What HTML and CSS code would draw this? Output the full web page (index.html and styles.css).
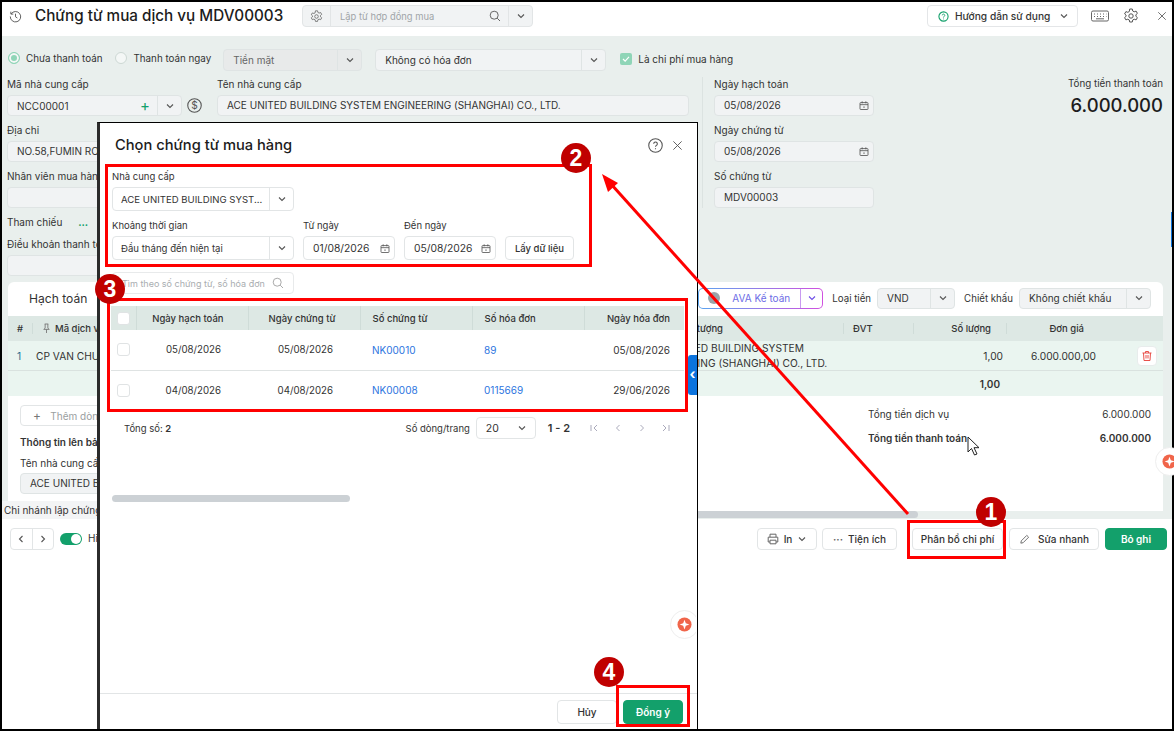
FILE: index.html
```html
<!DOCTYPE html>
<html lang="vi">
<head>
    <meta charset="UTF-8">
    <meta name="viewport" content="width=device-width, initial-scale=1.0">
    <title>Chứng từ mua dịch vụ</title>
    <link rel="stylesheet" href="styles.css">
</head>
<body>
<svg class="sprite" width="0" height="0">
    <symbol id="chev" viewBox="0 0 10 10"><path d="M2 3.500 5 6.500 8 3.500" fill="none" stroke="currentColor" stroke-width="1.100"/></symbol>
    <symbol id="cal" viewBox="0 0 12 12"><path d="M2 2.500h8a.8.8 0 0 1 .8.8V10a.8.8 0 0 1-.8.8H2a.8.8 0 0 1-.8-.8V3.300A.8.8 0 0 1 2 2.500ZM1.200 5h9.600M3.800 1v2.400M8.200 1v2.400M6 7v2" fill="none" stroke="currentColor"/></symbol>
    <symbol id="cross" viewBox="0 0 12 12"><path d="M1.500 1.500 10.500 10.500M10.500 1.500 1.500 10.500" fill="none" stroke="currentColor" stroke-width="1"/></symbol>
    <symbol id="gear" viewBox="0 0 16 16"><path d="M6.700 1h2.600l.4 2 1.500.8 1.900-.7 1.300 2.300-1.500 1.300v1.600l1.500 1.300-1.300 2.300-1.900-.7-1.500.8-.4 2H6.700l-.4-2-1.500-.8-1.900.7-1.300-2.300 1.500-1.300V7.200L1.600 5.900l1.300-2.300 1.900.7 1.500-.8Z" fill="none" stroke="currentColor"/><circle cx="8" cy="8" r="2.200" fill="none" stroke="currentColor"/></symbol>
    <symbol id="star" viewBox="0 0 16 16"><circle cx="8" cy="8" r="7.500" fill="#f0654a"/><path d="M8 2.800 9.400 6.600 13.200 8 9.400 9.400 8 13.200 6.600 9.400 2.800 8 6.600 6.600Z" fill="#fff"/></symbol>
</svg>

<div class="frame">
    <div class="app">
        <header class="topbar">
            <svg class="ico-history" viewBox="0 0 14 14"><path d="M2.300 4.200A5.600 5.600 0 1 1 1.400 7M2 1.800v2.600h2.600M7 4v3.300l2 1.300" fill="none" stroke="#555" stroke-width="1"/></svg>
            <h1>Chứng từ mua dịch vụ MDV00003</h1>
            <div class="combo">
                <span class="combo-gear"><svg class="ico-14" viewBox="0 0 16 16"><use href="#gear"/></svg></span>
                <span class="combo-text">Lập từ hợp đồng mua</span>
                <svg class="ico-search" viewBox="0 0 12 12"><circle cx="5.200" cy="5.200" r="4" fill="none" stroke="#666"/><path d="M8.200 8.200 11 11" stroke="#666"/></svg>
                <span class="combo-arrow"><svg class="ico-10" viewBox="0 0 10 10"><use href="#chev"/></svg></span>
            </div>
            <div class="topbar-right">
                <button class="guide">
                    <svg class="ico-guide" viewBox="0 0 12 12"><circle cx="6" cy="6" r="5" fill="none" stroke="#13a06b" stroke-width="1.200"/><path d="M4.600 4.700a1.400 1.400 0 1 1 2.100 1.300c-.5.300-.7.500-.7 1M6 8.300v.8" fill="none" stroke="#13a06b"/></svg>
                    Hướng dẫn sử dụng
                    <svg class="ico-10" viewBox="0 0 10 10"><use href="#chev"/></svg>
                </button>
                <svg class="ico-kb" viewBox="0 0 18 12"><rect x=".5" y="1" width="17" height="10" rx="1.500" fill="none" stroke="#666"/><path d="M3 4h1M6 4h1M9 4h1M12 4h1M15 4h.5M3 6.500h1M6 6.500h1M9 6.500h1M12 6.500h1M15 6.500h.5M5 8.800h8" stroke="#666"/></svg>
                <svg class="ico-gear" viewBox="0 0 16 16"><use href="#gear"/></svg>
                <svg class="ico-x" viewBox="0 0 12 12"><use href="#cross"/></svg>
            </div>
        </header>

        <main class="content">
            <div class="pay-row">
                <label class="radio radio-on"><i></i>Chưa thanh toán</label>
                <label class="radio"><i></i>Thanh toán ngay</label>
                <div class="select select-cash disabled"><span>Tiền mặt</span><b><svg class="ico-10" viewBox="0 0 10 10"><use href="#chev"/></svg></b></div>
                <div class="select select-invoice"><span>Không có hóa đơn</span><b><svg class="ico-10" viewBox="0 0 10 10"><use href="#chev"/></svg></b></div>
                <label class="check-on"><i><svg viewBox="0 0 10 10"><path d="M2.500 5 4.300 6.800 7.500 3.300" fill="none" stroke="#fff"/></svg></i>Là chi phí mua hàng</label>
            </div>

            <div class="form-area">
                <div class="form-left">
                    <div class="form-two">
                        <div class="field">
                            <label>Mã nhà cung cấp</label>
                            <div class="code-line">
                                <div class="select select-code"><span>NCC00001</span><em>+</em><b><svg class="ico-10" viewBox="0 0 10 10"><use href="#chev"/></svg></b></div>
                                <svg class="ico-dollar" viewBox="0 0 14 14"><circle cx="7" cy="7" r="6.300" fill="none" stroke="#555"/><text x="7" y="10.300" text-anchor="middle" class="dollar">$</text></svg>
                            </div>
                        </div>
                        <div class="field">
                            <label>Tên nhà cung cấp</label>
                            <div class="input">ACE UNITED BUILDING SYSTEM ENGINEERING (SHANGHAI) CO., LTD.</div>
                        </div>
                    </div>
                    <div class="field">
                        <label>Địa chỉ</label>
                        <div class="input">NO.58,FUMIN ROAD</div>
                    </div>
                    <div class="field">
                        <label>Nhân viên mua hàng</label>
                        <div class="input"></div>
                    </div>
                    <div class="ref-line">Tham chiếu <span>...</span></div>
                    <div class="field">
                        <label>Điều khoản thanh toán</label>
                        <div class="input"></div>
                    </div>
                </div>

                <div class="form-dates">
                    <div class="field">
                        <label>Ngày hạch toán</label>
                        <div class="input input-date">05/08/2026<svg class="ico-cal" viewBox="0 0 12 12"><use href="#cal"/></svg></div>
                    </div>
                    <div class="field">
                        <label>Ngày chứng từ</label>
                        <div class="input input-date">05/08/2026<svg class="ico-cal" viewBox="0 0 12 12"><use href="#cal"/></svg></div>
                    </div>
                    <div class="field">
                        <label>Số chứng từ</label>
                        <div class="input">MDV00003</div>
                    </div>
                </div>

                <div class="form-total">
                    <p>Tổng tiền thanh toán</p>
                    <strong>6.000.000</strong>
                </div>
            </div>

            <section class="card">
                <div class="card-tabs">
                    <span class="tab">Hạch toán</span>
                    <div class="card-tools">
                        <div class="ava">
                            <span class="ava-main"><i class="ava-ball"></i>AVA Kế toán</span>
                            <span class="ava-arrow"><svg class="ico-10" viewBox="0 0 10 10"><use href="#chev"/></svg></span>
                        </div>
                        <span class="tool-label">Loại tiền</span>
                        <div class="select select-vnd"><span>VND</span><b><svg class="ico-10" viewBox="0 0 10 10"><use href="#chev"/></svg></b></div>
                        <span class="tool-label">Chiết khấu</span>
                        <div class="select select-discount"><span>Không chiết khấu</span><b><svg class="ico-10" viewBox="0 0 10 10"><use href="#chev"/></svg></b></div>
                    </div>
                </div>
                <div class="grid-row grid-head">
                    <span>#</span>
                    <span class="cell-code">
                        <svg class="ico-pin" viewBox="0 0 10 12"><path d="M3 1h4M3.500 1v4.500L2 7h6L6.500 5.500V1M5 7v4" fill="none" stroke="#777"/></svg>
                        Mã dịch vụ
                    </span>
                    <span class="cell-party">Tên đối tượng</span>
                    <span>ĐVT</span>
                    <span class="num">Số lượng</span>
                    <span class="num">Đơn giá</span>
                    <span></span>
                </div>
                <div class="grid-row grid-data">
                    <span class="cell-idx">1</span>
                    <span class="cell-code">CP VAN CHUYỂN</span>
                    <span class="cell-party cell-wrap">ACE UNITED BUILDING SYSTEM ENGINEERING (SHANGHAI) CO., LTD.</span>
                    <span></span>
                    <span class="num">1,00</span>
                    <span class="num">6.000.000,00</span>
                    <span class="cell-del">
                        <i class="del-btn"><svg viewBox="0 0 12 12"><path d="M1.500 3h9M4.500 3V1.500h3V3M2.500 3l.5 7.500h6L9.500 3M5 5v3.500M7 5v3.500" fill="none" stroke="#e8504a"/></svg></i>
                    </span>
                </div>
                <div class="grid-row grid-sum">
                    <span></span><span></span><span></span><span></span>
                    <span class="num"><b>1,00</b></span>
                    <span></span><span></span>
                </div>
                <div class="card-bottom">
                    <div class="bottom-left">
                        <div class="add-line">+ <span>Thêm dòng</span></div>
                        <p class="info-title">Thông tin lên bảng kê</p>
                        <p class="info-label">Tên nhà cung cấp</p>
                        <div class="input info-input">ACE UNITED BUILDING</div>
                        <p class="branch">Chi nhánh lập chứng từ</p>
                    </div>
                    <div class="bottom-right">
                        <div class="sum-line"><span>Tổng tiền dịch vụ</span><span>6.000.000</span></div>
                        <div class="sum-line sum-bold"><span>Tổng tiền thanh toán</span><span>6.000.000</span></div>
                    </div>
                </div>
            </section>
            <div class="page-scroll"><i></i></div>
        </main>

        <footer class="actions">
            <div class="pager-btns">
                <span><svg class="ico-10 flip" viewBox="0 0 10 10"><use href="#chev"/></svg></span>
                <span><svg class="ico-10 flip-r" viewBox="0 0 10 10"><use href="#chev"/></svg></span>
            </div>
            <i class="toggle"></i>
            <span class="toggle-label">Hiển thị</span>
            <div class="actions-right">
                <button class="btn btn-print">
                    <svg class="ico-print" viewBox="0 0 12 12"><path d="M3 4V1.200h6V4M3 9H1.200V4.200h9.600V9H9M3 7.200h6v3.600H3Z" fill="none" stroke="#666"/></svg>
                    In <svg class="ico-10" viewBox="0 0 10 10"><use href="#chev"/></svg>
                </button>
                <button class="btn btn-util"><span class="dots">···</span> Tiện ích</button>
                <button class="btn btn-alloc">Phân bổ chi phí</button>
                <button class="btn btn-quick">
                    <svg class="ico-pen" viewBox="0 0 12 12"><path d="M2 10 2.500 7.500 8.500 1.500 10.500 3.500 4.500 9.500Z" fill="none" stroke="#666"/></svg>
                    Sửa nhanh
                </button>
                <button class="btn btn-green btn-unpost">Bỏ ghi</button>
            </div>
        </footer>
    </div>

    <div class="modal">
        <div class="modal-head">
            <h2>Chọn chứng từ mua hàng</h2>
            <svg class="ico-help" viewBox="0 0 14 14"><circle cx="7" cy="7" r="6.300" fill="none" stroke="#555"/><path d="M5.300 5.400a1.700 1.700 0 1 1 2.600 1.500c-.6.400-.9.700-.9 1.300M7 9.600v1" fill="none" stroke="#555"/></svg>
            <svg class="ico-x" viewBox="0 0 12 12"><use href="#cross"/></svg>
        </div>
        <div class="filter">
            <label>Nhà cung cấp</label>
            <div class="mselect mselect-wide"><span>ACE UNITED BUILDING SYST...</span><b><svg class="ico-10" viewBox="0 0 10 10"><use href="#chev"/></svg></b></div>
            <div class="filter-row">
                <div>
                    <label>Khoảng thời gian</label>
                    <div class="mselect mselect-wide"><span>Đầu tháng đến hiện tại</span><b><svg class="ico-10" viewBox="0 0 10 10"><use href="#chev"/></svg></b></div>
                </div>
                <div>
                    <label>Từ ngày</label>
                    <div class="mdate">01/08/2026<svg class="ico-cal" viewBox="0 0 12 12"><use href="#cal"/></svg></div>
                </div>
                <div>
                    <label>Đến ngày</label>
                    <div class="mdate">05/08/2026<svg class="ico-cal" viewBox="0 0 12 12"><use href="#cal"/></svg></div>
                </div>
                <button class="btn btn-fetch">Lấy dữ liệu</button>
            </div>
        </div>
        <div class="msearch">
            <span>Tìm theo số chứng từ, số hóa đơn</span>
            <svg class="ico-search" viewBox="0 0 12 12"><circle cx="5.200" cy="5.200" r="4" fill="none" stroke="#aaa"/><path d="M8.200 8.200 11 11" stroke="#aaa"/></svg>
        </div>
        <table class="docs">
            <thead>
                <tr>
                    <th class="col-check"><i class="box box-head"></i></th>
                    <th class="col-date">Ngày hạch toán</th>
                    <th class="col-date">Ngày chứng từ</th>
                    <th class="col-link">Số chứng từ</th>
                    <th class="col-link">Số hóa đơn</th>
                    <th class="col-end">Ngày hóa đơn</th>
                </tr>
            </thead>
            <tbody>
                <tr>
                    <td class="col-check"><i class="box"></i></td>
                    <td class="col-date">05/08/2026</td>
                    <td class="col-date">05/08/2026</td>
                    <td class="col-link"><a>NK00010</a></td>
                    <td class="col-link"><a>89</a></td>
                    <td class="col-end">05/08/2026</td>
                </tr>
                <tr>
                    <td class="col-check"><i class="box"></i></td>
                    <td class="col-date">04/08/2026</td>
                    <td class="col-date">04/08/2026</td>
                    <td class="col-link"><a>NK00008</a></td>
                    <td class="col-link"><a>0115669</a></td>
                    <td class="col-end">29/06/2026</td>
                </tr>
            </tbody>
        </table>
        <div class="mpager">
            <span class="mpager-total">Tổng số: <b>2</b></span>
            <span class="mpager-label">Số dòng/trang</span>
            <div class="mpager-size"><span>20</span><svg class="ico-10" viewBox="0 0 10 10"><use href="#chev"/></svg></div>
            <b class="mpager-range">1 - 2</b>
            <div class="mpager-icons">
                <svg viewBox="0 0 10 10"><path d="M2 2v6M8 2 5 5 8 8" fill="none" stroke="#aab"/></svg>
                <svg viewBox="0 0 10 10"><path d="M6.500 2 3.500 5 6.500 8" fill="none" stroke="#aab"/></svg>
                <svg viewBox="0 0 10 10"><path d="M3.500 2 6.500 5 3.500 8" fill="none" stroke="#aab"/></svg>
                <svg viewBox="0 0 10 10"><path d="M8 2v6M2 2 5 5 2 8" fill="none" stroke="#aab"/></svg>
            </div>
        </div>
        <div class="mscroll"></div>
        <div class="modal-foot">
            <button class="btn btn-cancel">Hủy</button>
            <button class="btn btn-green btn-ok">Đồng ý</button>
        </div>
    </div>

    <!-- floating bits and the red markup drawn over the screenshot -->
    <span class="blue-line"></span>
    <span class="side-tab">‹</span>
    <span class="star-btn star-modal"><svg viewBox="0 0 16 16"><use href="#star"/></svg></span>
    <span class="star-btn star-page"><svg viewBox="0 0 16 16"><use href="#star"/></svg></span>

    <span class="redbox box-1"></span>
    <span class="redbox box-2"></span>
    <span class="redbox box-3"></span>
    <span class="redbox box-4"></span>
    <svg class="arrow" viewBox="0 0 1174 731">
        <path d="M908 514 611 184" stroke="#f00" stroke-width="3" fill="none"/>
        <path d="M602 174 618 183 608 192Z" fill="#f00"/>
        <path d="M968 437v15l3.500-3.500 3 6.500 2.500-1-3-6.300h5Z" fill="#fff" stroke="#222"/>
    </svg>
    <span class="step step-1">1</span>
    <span class="step step-2">2</span>
    <span class="step step-3">3</span>
    <span class="step step-4">4</span>
</div>
</body>
</html>
```

FILE: styles.css
```css
* {
    margin: 0;
    padding: 0;
    box-sizing: border-box;
}

body {
    font-family: 'Inter', 'Liberation Sans', sans-serif;
    font-size: 10px;
    color: #333;
    background: #fff;
}

.sprite {
    position: absolute;
}

svg {
    display: block;
    flex: none;
}

i {
    display: block;
    font-style: normal;
}

.ico-10 { width: 10px; height: 10px; color: #555; }
.ico-14 { width: 13px; height: 13px; color: #666; }

.frame {
    position: relative;
    width: 1174px;
    height: 731px;
    padding: 2px;
    background: #000;
    overflow: hidden;
}

.app {
    height: 727px;
    background: #fff;
    display: flex;
    flex-direction: column;
}

/* top bar */
.topbar {
    height: 34px;
    padding: 3px 5px 0 7px;
    display: flex;
    align-items: flex-start;
    flex: none;
}

.ico-history {
    width: 13px;
    height: 13px;
    margin-top: 5px;
}

.topbar h1 {
    font-size: 15.250px;
    font-weight: 500;
    color: #1c1c1c;
    margin-left: 13px;
    width: 267px;
    line-height: 22px;
    white-space: nowrap;
}

.combo {
    width: 231px;
    height: 22px;
    display: flex;
    align-items: center;
    background: #f1f3f4;
    border: 1px solid #e2e5e6;
    border-radius: 4px;
}

.combo-gear {
    width: 28px;
    height: 100%;
    border-right: 1px solid #e2e5e6;
    display: flex;
    align-items: center;
    justify-content: center;
}

.combo-text {
    flex: 1;
    padding-left: 9px;
    color: #a0a5a8;
    font-size: 9.400px;
}

.ico-search {
    width: 12px;
    height: 12px;
    margin-right: 7px;
}

.combo-arrow {
    width: 24px;
    height: 100%;
    border-left: 1px solid #e2e5e6;
    display: flex;
    align-items: center;
    justify-content: center;
}

.topbar-right {
    margin-left: auto;
    display: flex;
    align-items: center;
    height: 22px;
}

.guide {
    width: 151px;
    height: 22px;
    display: flex;
    align-items: center;
    gap: 6px;
    padding-left: 10px;
    background: #fff;
    border: 1px solid #e4e6e8;
    border-radius: 4px;
    font: 500 10.200px 'Inter', sans-serif;
    color: #333;
}

.guide .ico-10 {
    margin-left: 3px;
}

.ico-guide { width: 11px; height: 11px; }
.ico-kb { width: 18px; height: 12px; margin-left: 13px; }
.ico-gear { width: 16px; height: 16px; margin-left: 14px; color: #555; }
.topbar-right .ico-x { width: 10px; height: 10px; margin-left: 18px; color: #555; }

/* form */
.content {
    height: 483px;
    flex: none;
    background: #e9efed;
    padding: 13px 0 0 5px;
    display: flex;
    flex-direction: column;
}

.pay-row {
    height: 22px;
    display: flex;
    align-items: center;
    margin-bottom: 6px;
}

.radio {
    display: flex;
    align-items: center;
    gap: 6px;
    margin-right: 12px;
    margin-top: -4px;
    margin-left: 1px;
    font-size: 9.800px;
}

.radio i {
    width: 12px;
    height: 12px;
    border-radius: 50%;
    border: 1px solid #cdd8d4;
    background: #f4f7f6;
}

.radio-on i {
    background: #8fd5b7;
    box-shadow: inset 0 0 0 2px #f4f7f6;
    border-color: #8fd5b7;
}

.select {
    height: 21px;
    display: flex;
    align-items: center;
    background: #f1f3f4;
    border: 1px solid #dfe4e4;
    border-radius: 4px;
}

.select span {
    flex: 1;
    padding-left: 9px;
    white-space: nowrap;
}

.select b {
    width: 24px;
    height: 100%;
    border-left: 1px solid #dfe4e4;
    display: flex;
    align-items: center;
    justify-content: center;
}

.select em {
    color: #13a06b;
    font-style: normal;
    font-size: 15px;
    line-height: 1;
    margin-right: 7px;
}

.disabled {
    background: #e8eaea;
    color: #666;
}

.select-cash { width: 139px; margin: 0 13px 0 0; height: 22px; }
.select-invoice { width: 231px; height: 22px; }

.check-on {
    display: flex;
    align-items: center;
    gap: 6px;
    margin-left: 14px;
    margin-top: -3px;
}

.check-on i {
    width: 12px;
    height: 12px;
    border-radius: 2px;
    background: #8fd5b7;
}

.form-area {
    display: flex;
    height: 205px;
    flex: none;
}

.form-left {
    width: 682px;
}

.form-two {
    display: flex;
}

.form-two .field:first-child {
    width: 175px;
}

.form-two .field:last-child {
    flex: 1;
    margin-left: 35px;
}

.field {
    margin-bottom: 7px;
}

.field label,
.filter label {
    display: block;
    line-height: 14px;
    margin-bottom: 4px;
    white-space: nowrap;
}

.input {
    height: 21px;
    line-height: 19px;
    padding-left: 9px;
    background: #f1f3f4;
    border: 1px solid #dfe4e4;
    border-radius: 4px;
    white-space: nowrap;
    overflow: hidden;
}

.code-line {
    position: relative;
    display: flex;
}

.select-code {
    width: 175px;
    flex: none;
}

.ico-dollar {
    width: 15px;
    height: 15px;
    margin-top: 3px;
    position: absolute;
    left: 180px;
}

.dollar {
    font-size: 9.500px;
    fill: #555;
}

.ref-line {
    height: 15px;
    line-height: 15px;
    margin-bottom: 7px;
}

.ref-line span {
    color: #13a06b;
    font-weight: 700;
    margin-left: 13px;
}

.form-dates {
    width: 172px;
    margin-left: 13px;
    padding-left: 11px;
    border-left: 1px solid #dce3e1;
    height: 131px;
}

.form-dates .input {
    width: 160px;
}

.input-date {
    display: flex;
    align-items: center;
    justify-content: space-between;
    padding-right: 4px;
}

.ico-cal {
    width: 10px;
    height: 11px;
    color: #555;
}

.form-total {
    flex: 1;
    text-align: right;
    padding-right: 9px;
}

.form-total p {
    line-height: 14px;
    font-size: 9.800px;
}

.form-total strong {
    display: block;
    font-size: 18.500px;
    font-weight: 500;
    color: #1d1d1d;
    line-height: 24px;
    margin-top: 2px;
}

/* detail card */
.card {
    width: 1155px;
    margin-left: 1px;
    height: 229px;
    flex: none;
    background: #fff;
    border-radius: 6px 6px 0 0;
}

.card-tabs {
    height: 34px;
    display: flex;
    align-items: center;
}

.tab {
    font-size: 12.100px;
    margin-left: 21px;
    margin-top: -2px;
}

.card-tools {
    margin-left: auto;
    display: flex;
    align-items: center;
    padding-right: 12px;
    margin-top: -2px;
}

.ava {
    width: 125px;
    height: 21px;
    display: flex;
    border: 1px solid transparent;
    border-radius: 5px;
    background: linear-gradient(#fff, #fff) padding-box,
        linear-gradient(90deg, #5aa5f0, #d050e0) border-box;
}

.ava-main {
    flex: 1;
    display: flex;
    align-items: center;
    gap: 12px;
    padding-left: 9px;
    color: #6d6de6;
}

.ava-ball {
    width: 12px;
    height: 12px;
    border-radius: 50%;
    background: #9aa3a8;
}

.ava-arrow {
    width: 22px;
    border-left: 1px solid #c89af0;
    display: flex;
    align-items: center;
    justify-content: center;
}

.ava-arrow .ico-10 {
    color: #6d4de6;
}

.tool-label {
    margin: 0 6px 0 9px;
    font-size: 9.700px;
}

.select-vnd { width: 78px; }
.select-discount { width: 132px; }

.grid-row {
    display: grid;
    grid-template-columns: 24px 611px 200px 70px 93px 93px 64px;
    align-items: center;
}

.grid-head {
    height: 25px;
    background: #dde8e4;
    font-weight: 500;
    font-size: 9.500px;
}

.grid-head span {
    padding-left: 9px;
    border-left: 1px solid #cfdcd8;
}

.grid-head span:first-child {
    border-left: 0;
}

.grid-data {
    height: 30px;
    background: #eaf5f0;
    border-bottom: 1px solid #d9e2df;
    font-size: 10.200px;
}

.grid-sum {
    height: 25px;
    background: #eaf5f0;
}

.grid-head .num {
    text-align: right;
    padding-right: 15px;
}

.grid-data .num {
    text-align: right;
    padding-right: 3px;
}

.grid-sum .num {
    text-align: right;
    padding-right: 6px;
}

.grid-sum b {
    font-weight: 600;
}

.cell-idx {
    padding-left: 9px;
    color: #2a6f8f;
}

.grid-data .cell-code {
    padding-left: 4px;
}

.grid-head .cell-code {
    padding-left: 9px;
}

.cell-code {
    display: flex;
    align-items: center;
    gap: 4px;
}

.ico-pin {
    width: 9px;
    height: 11px;
}

.grid-head .cell-party {
    padding-left: 17px;
}

.cell-wrap {
    line-height: 15px;
    padding-left: 4px;
}

.cell-del {
    display: flex;
    justify-content: flex-end;
    padding-right: 6px;
}

.del-btn {
    width: 20px;
    height: 20px;
    background: #fff;
    border: 1px solid #e8ecec;
    border-radius: 4px;
    padding: 3px;
}

.card-bottom {
    height: 115px;
    display: flex;
    justify-content: space-between;
    position: relative;
}

.bottom-left {
    width: 90px;
    padding: 9px 0 0 12px;
    white-space: nowrap;
}

.add-line {
    width: 90px;
    height: 21px;
    line-height: 19px;
    border: 1px solid #e2e5e6;
    border-radius: 4px;
    padding-left: 12px;
    color: #777;
    font-size: 12px;
}

.add-line span {
    font-size: 10px;
    margin-left: 6px;
    color: #9a9ea0;
}

.info-title {
    font-weight: 600;
    line-height: 14px;
    margin-top: 9px;
}

.info-label {
    line-height: 14px;
    margin-top: 7px;
}

.info-input {
    width: 160px;
    margin-top: 3px;
}

.branch {
    margin: 7px 0 0 -18px;
    width: 130px;
    line-height: 18px;
    background: #f3f4f5;
    padding-left: 2px;
    color: #333;
}

.bottom-right {
    width: 295px;
    padding: 10px 12px 0 0;
}

.sum-line {
    display: flex;
    justify-content: space-between;
    line-height: 16px;
    margin-bottom: 8px;
}

.sum-bold {
    font-weight: 600;
}

.page-scroll {
    height: 8px;
    flex: none;
}

.page-scroll i {
    width: 911px;
    height: 7px;
    background: #ccd1d5;
    border-radius: 4px;
}

/* bottom actions */
.actions {
    flex: 1;
    display: flex;
    align-items: flex-start;
    padding: 9px 5px 0 8px;
}

.pager-btns {
    display: flex;
    width: 44px;
    height: 22px;
    border: 1px solid #e2e5e6;
    border-radius: 4px;
}

.pager-btns span {
    flex: 1;
    display: flex;
    align-items: center;
    justify-content: center;
}

.pager-btns span + span {
    border-left: 1px solid #e2e5e6;
}

.flip { transform: rotate(90deg); }
.flip-r { transform: rotate(-90deg); }

.toggle {
    position: relative;
    width: 22px;
    height: 12px;
    margin: 5px 0 0 6px;
    border-radius: 6px;
    background: #13a06b;
}

.toggle::after {
    content: "";
    position: absolute;
    right: 1px;
    top: 1px;
    width: 10px;
    height: 10px;
    border-radius: 50%;
    background: #fff;
}

.toggle-label {
    margin: 4px 0 0 6px;
}

.actions-right {
    margin-left: auto;
    display: flex;
    gap: 5px;
}

.btn {
    height: 22px;
    display: flex;
    align-items: center;
    justify-content: center;
    gap: 5px;
    background: #fff;
    border: 1px solid #e2e5e6;
    border-radius: 4px;
    font: 500 10px 'Inter', sans-serif;
    color: #333;
    white-space: nowrap;
}

.btn-green {
    background: #13a06b;
    border-color: #13a06b;
    color: #fff;
    font-weight: 600;
}

.btn-print { width: 60px; }
.btn-util { width: 75px; margin-right: 10px; }
.btn-alloc { width: 91px; margin-right: 1px; }
.btn-quick { width: 90px; gap: 8px; margin-right: 1px; }
.btn-unpost { width: 62px; }

.ico-print { width: 12px; height: 12px; }
.ico-pen { width: 11px; height: 11px; }
.dots { font-weight: 700; color: #666; }

/* modal */
.modal {
    position: absolute;
    left: 97px;
    top: 122px;
    width: 601px;
    height: 607px;
    background: #fff;
    border: 1px solid #000;
    border-left: 3px solid #2b2b2b;
    border-bottom: 0;
    display: flex;
    flex-direction: column;
}

.modal-head {
    height: 44px;
    flex: none;
    display: flex;
    align-items: center;
    padding: 0 14px 0 15px;
}

.modal-head h2 {
    font-size: 14.700px;
    font-weight: 500;
    color: #1c1c1c;
    flex: 1;
}

.ico-help {
    width: 15px;
    height: 15px;
}

.modal-head .ico-x {
    width: 11px;
    height: 11px;
    margin-left: 9px;
    color: #555;
}

.filter {
    padding: 2px 0 0 12px;
    height: 104px;
    flex: none;
}

.filter label {
    font-size: 9.500px;
    margin-top: 1px;
    margin-bottom: 3px;
}

.mselect {
    height: 24px;
    display: flex;
    align-items: center;
    border: 1px solid #e2e5e6;
    border-radius: 4px;
    margin-bottom: 7px;
}

.mselect-wide {
    width: 182px;
}

.mselect span {
    flex: 1;
    min-width: 0;
    padding-left: 8px;
    white-space: nowrap;
    font-size: 9.600px;
}

.mselect b {
    width: 24px;
    height: 100%;
    border-left: 1px solid #e2e5e6;
    display: flex;
    align-items: center;
    justify-content: center;
    flex: none;
}

.filter-row {
    display: flex;
    align-items: flex-end;
    gap: 9px;
}

.filter-row .mselect {
    margin-bottom: 0;
}

.mdate {
    width: 92px;
    height: 24px;
    display: flex;
    align-items: center;
    justify-content: space-between;
    padding: 0 4px 0 9px;
    border: 1px solid #e2e5e6;
    border-radius: 4px;
    font-size: 10.300px;
}

.btn-fetch {
    width: 69px;
    height: 24px;
    font-size: 9.500px;
}

.msearch {
    width: 182px;
    height: 22px;
    margin: 1px 0 0 12px;
    flex: none;
    display: flex;
    align-items: center;
    justify-content: space-between;
    padding: 0 9px;
    border: 1px solid #e8eaeb;
    border-radius: 4px;
    color: #a9adb0;
    font-size: 9px;
    white-space: nowrap;
}

.msearch .ico-search {
    margin-right: 0;
}

.docs {
    width: 573px;
    margin: 12px 0 0 11px;
    border-collapse: collapse;
    table-layout: fixed;
    flex: none;
}

.docs th {
    height: 24px;
    background: #dde8e4;
    font-weight: 500;
    font-size: 9.500px;
}

.docs th + th {
    border-left: 1px solid #cfdcd8;
}

.docs td {
    height: 40px;
    border-bottom: 1px solid #dfe3e3;
}

.docs tr:last-child td {
    border-bottom: 0;
}

.col-check { width: 25px; padding-left: 6px; }
.col-date { width: 112px; text-align: right; padding-right: 24px; }
td.col-date { padding-right: 27px; font-size: 9.700px; }
.col-link { width: 112px; text-align: left; padding-left: 12px; }
.col-end { text-align: right; padding-right: 14px; }

.docs a {
    color: #2b74e0;
}

.box {
    width: 13px;
    height: 13px;
    border: 1px solid #e0e3e4;
    border-radius: 3px;
    background: #fff;
}

.mpager {
    display: flex;
    align-items: center;
    height: 22px;
    margin: 7px 0 0 24px;
    flex: none;
    font-size: 9.500px;
}

.mpager-total b {
    font-weight: 600;
}

.mpager-label {
    margin-left: auto;
}

.mpager-size {
    width: 60px;
    height: 22px;
    margin-left: 6px;
    display: flex;
    align-items: center;
    justify-content: space-between;
    padding: 0 8px 0 9px;
    border: 1px solid #e2e5e6;
    border-radius: 4px;
    font-size: 10.500px;
}

.mpager-range {
    font-weight: 600;
    font-size: 11px;
    margin-left: 12px;
}

.mpager-icons {
    display: flex;
    gap: 14px;
    margin: 0 26px 0 19px;
}

.mpager-icons svg {
    width: 10px;
    height: 10px;
}

.mscroll {
    width: 238px;
    height: 7px;
    margin: 56px 0 0 12px;
    background: #ccd1d5;
    border-radius: 4px;
    flex: none;
}

.modal-foot {
    margin-top: auto;
    height: 36px;
    flex: none;
    border-top: 1px solid #e2e5e6;
    display: flex;
    justify-content: flex-end;
    gap: 6px;
    padding: 6px 14px 0 0;
}

.btn-cancel,
.btn-ok {
    width: 60px;
    height: 24px;
}

/* things that float over the page */
.blue-line {
    position: absolute;
    left: 1171px;
    top: 212px;
    width: 1px;
    height: 35px;
    background: #0b74de;
}

.side-tab {
    position: absolute;
    left: 688px;
    top: 355px;
    width: 9px;
    height: 40px;
    background: #0b74de;
    color: #fff;
    font-size: 14px;
    font-weight: 700;
    line-height: 38px;
    text-align: center;
    border-radius: 3px 0 0 3px;
}

.star-btn {
    position: absolute;
    width: 29px;
    height: 29px;
    padding: 6px;
    background: #fff;
    border: 1px solid #eeeeee;
    border-radius: 50%;
}

.star-btn svg {
    width: 15px;
    height: 15px;
}

.star-modal {
    left: 670px;
    top: 610px;
    clip-path: inset(-2px 3px -2px -2px);
}

.star-page {
    left: 1155px;
    top: 447px;
}

.redbox {
    position: absolute;
    border: 3px solid #f00;
}

.box-1 { left: 907px; top: 520px; width: 99px; height: 39px; }
.box-2 { left: 105px; top: 164px; width: 487px; height: 103px; }
.box-3 { left: 107px; top: 298px; width: 581px; height: 114px; }
.box-4 { left: 616px; top: 685px; width: 74px; height: 42px; }

.arrow {
    position: absolute;
    left: 0;
    top: 0;
    width: 1174px;
    height: 731px;
    pointer-events: none;
}

.step {
    position: absolute;
    width: 30px;
    height: 30px;
    border-radius: 50%;
    background: #c00000;
    color: #fff;
    font: 700 23px/30px 'Liberation Sans', sans-serif;
    text-align: center;
}

.step-1 { left: 976px; top: 497px; }
.step-2 { left: 561px; top: 143px; }
.step-3 { left: 95px; top: 274px; }
.step-4 { left: 594px; top: 657px; }
```
